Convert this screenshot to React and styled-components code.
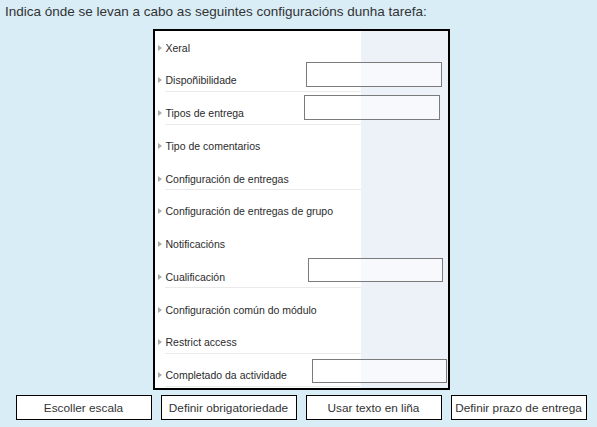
import styled, { createGlobalStyle } from "styled-components";

const GlobalStyle = createGlobalStyle`
  html, body {
    margin: 0;
    padding: 0;
    background: #d9edf7;
  }
  body {
    font-family: "Liberation Sans", Arial, sans-serif;
    color: #333;
  }
`;

const Page = styled.div`
  width: 597px;
  height: 427px;
  box-sizing: border-box;
  padding: 4px 0 0 5px;
  display: flex;
  flex-direction: column;
  background: #d9edf7;
`;

const Prompt = styled.p`
  margin: 0;
  font-size: 13.5px;
  line-height: 16px;
  color: #333;
`;

const DropArea = styled.div`
  margin-top: 9px;
  display: flex;
  justify-content: center;
`;

const Shot = styled.div`
  position: relative;
  width: 297px;
  height: 361px;
  box-sizing: border-box;
  border: 2px solid #000;
  background: #edf2f9;
  display: grid;
  grid-template-columns: 206px 1fr;
  overflow: hidden;
`;

const Menu = styled.div`
  background: #fff;
  display: flex;
  flex-direction: column;
`;

const Row = styled.div`
  height: 32.75px;
  box-sizing: border-box;
  padding-top: 10px;
  display: flex;
  flex-direction: column;
`;

const Label = styled.div`
  display: flex;
  align-items: center;
  height: 13px;
  padding-left: 3px;
  font-size: 10.5px;
  color: #2b2b2b;
  white-space: nowrap;
`;

const Arrow = styled.span`
  width: 0;
  height: 0;
  margin-right: 4px;
  border-top: 3px solid transparent;
  border-bottom: 3px solid transparent;
  border-left: 4px solid #aaa;
`;

const Rule = styled.div`
  margin: 4px 0 0 10px;
  height: 1px;
  background: ${(p) => (p.show ? "#eaeaea" : "transparent")};
`;

const Shade = styled.div`
  background: #edf2f9;
`;

const Slot = styled.div`
  position: absolute;
  box-sizing: border-box;
  border: 1.5px solid #7b7b7b;
  background: rgba(255, 255, 255, 0.55);
`;

const Choices = styled.div`
  margin-top: 5px;
  display: flex;
  justify-content: center;
  gap: 9px;
`;

const Choice = styled.div`
  min-width: 136px;
  height: 25px;
  box-sizing: border-box;
  padding: 0 3px;
  border: 1px solid #000;
  background: #fff;
  display: flex;
  align-items: center;
  justify-content: center;
  font-size: 11.8px;
  color: #333;
  white-space: nowrap;
`;

const items = [
  { text: "Xeral", rule: false },
  { text: "Dispoñibilidade", rule: true },
  { text: "Tipos de entrega", rule: true },
  { text: "Tipo de comentarios", rule: false },
  { text: "Configuración de entregas", rule: true },
  { text: "Configuración de entregas de grupo", rule: false },
  { text: "Notificacións", rule: false },
  { text: "Cualificación", rule: true },
  { text: "Configuración común do módulo", rule: false },
  { text: "Restrict access", rule: true },
  { text: "Completado da actividade", rule: true },
];

// drop zones over the picture, relative to its border box
const slots = [
  { left: 151, top: 31, width: 136, height: 25 },
  { left: 149, top: 64, width: 136, height: 25 },
  { left: 153, top: 227, width: 135, height: 24 },
  { left: 157, top: 328, width: 135, height: 24 },
];

const choices = [
  "Escoller escala",
  "Definir obrigatoriedade",
  "Usar texto en liña",
  "Definir prazo de entrega",
];

export default function App() {
  return (
    <>
      <GlobalStyle />
      <Page>
        <Prompt>
          Indica ónde se levan a cabo as seguintes configuracións dunha tarefa:
        </Prompt>
        <DropArea>
          <Shot>
            <Menu>
              {items.map((it) => (
                <Row key={it.text}>
                  <Label>
                    <Arrow />
                    {it.text}
                  </Label>
                  <Rule show={it.rule} />
                </Row>
              ))}
            </Menu>
            <Shade />
            {slots.map((s, i) => (
              <Slot
                key={i}
                style={{ left: s.left, top: s.top, width: s.width, height: s.height }}
              />
            ))}
          </Shot>
        </DropArea>
        <Choices>
          {choices.map((c) => (
            <Choice key={c}>{c}</Choice>
          ))}
        </Choices>
      </Page>
    </>
  );
}
